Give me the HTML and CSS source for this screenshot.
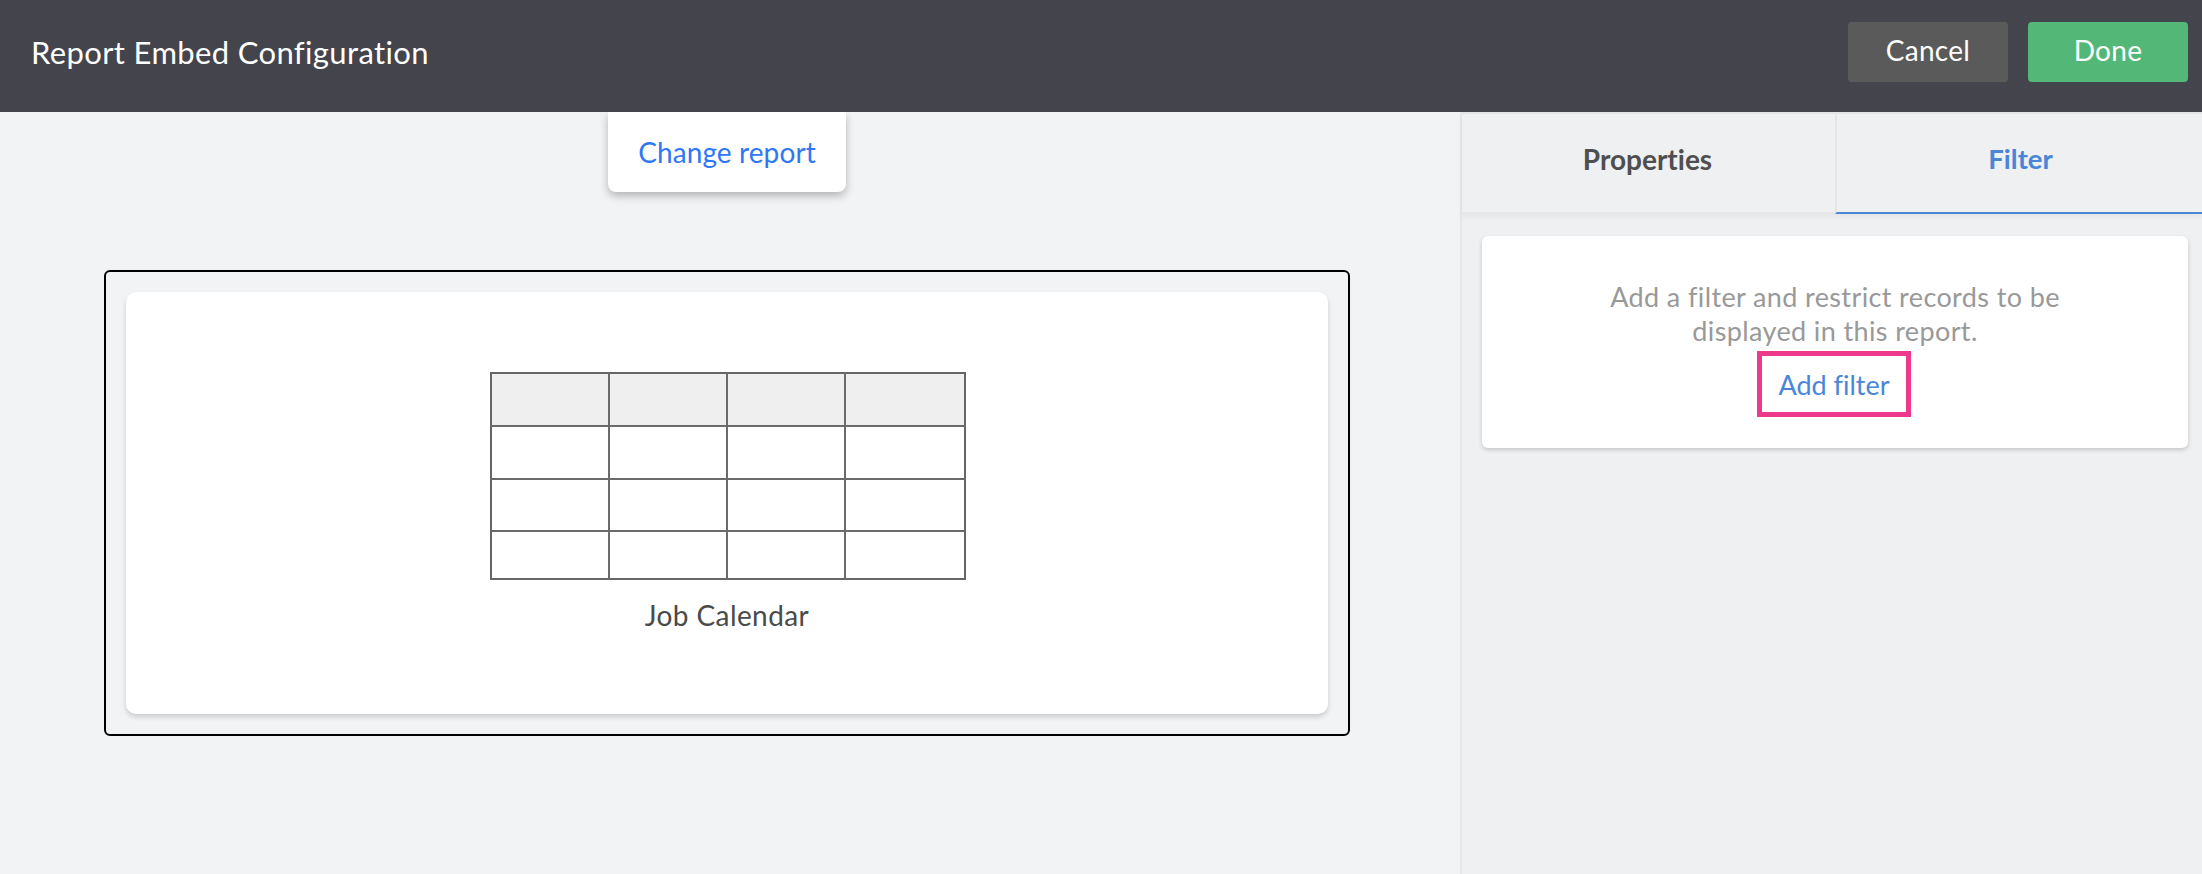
FILE: index.html
```html
<!DOCTYPE html>
<html lang="en">
<head>
<meta charset="utf-8">
<title>Report Embed Configuration</title>
<link rel="stylesheet" href="styles.css">
</head>
<body>
<header class="topbar">
  <h1 class="title">Report Embed Configuration</h1>
  <div class="actions">
    <button class="btn btn-cancel">Cancel</button>
    <button class="btn btn-done">Done</button>
  </div>
</header>
<div class="body">
  <main class="canvas">
    <div class="stage">
      <button class="change-report">Change report</button>
      <div class="frame">
        <div class="report-card">
          <svg class="table-art" width="476" height="208" viewBox="0 0 476 208" aria-hidden="true">
            <rect x="1" y="1" width="474" height="53" fill="#efefef"/>
            <rect x="1" y="1" width="474" height="206" fill="none" stroke="#666" stroke-width="2"/>
            <path d="M0 54H476M0 107H476M0 159H476M119 0V208M237 0V208M355 0V208" fill="none" stroke="#6a6a6a" stroke-width="2"/>
          </svg>
          <div class="report-name">Job Calendar</div>
        </div>
      </div>
    </div>
  </main>
  <aside class="sidebar">
    <nav class="tabs">
      <div class="tab">Properties</div>
      <div class="tab tab-active">Filter</div>
    </nav>
    <section class="filter-card">
      <p class="filter-text">Add a filter and restrict records to be<br>displayed in this report.</p>
      <a class="add-filter">Add filter</a>
    </section>
  </aside>
</div>
</body>
</html>
```
FILE: styles.css
```css
* { box-sizing: border-box; }
html, body { height: 100%; }
body {
  margin: 0;
  font-family: "Lato", "Open Sans", sans-serif;
  font-variant-ligatures: none;
  background: #f2f3f5;
  display: flex;
  flex-direction: column;
  overflow: hidden;
}
.topbar {
  height: 112px;
  flex: none;
  background: #43444c;
  display: flex;
  align-items: center;
  justify-content: space-between;
  padding: 0 14px 8px 31px;
  position: relative;
  z-index: 2;
}
.title {
  margin: 0;
  font-size: 31px;
  letter-spacing: .36px;
  font-weight: 400;
  color: #fff;
}
.actions { display: flex; gap: 20px; }
.btn {
  width: 160px;
  height: 60px;
  border: 0;
  border-radius: 4px;
  color: #fff;
  font: 400 28px "Lato", sans-serif;
  letter-spacing: .3px;
  padding: 0 0 4px;
}
.btn-cancel { background: #5a5a5a; }
.btn-done { background: #52b777; }
.body { flex: 1; display: flex; min-height: 0; }
.canvas { flex: 1; padding-left: 104px; }
.stage {
  width: 1246px;
  display: flex;
  flex-direction: column;
  align-items: center;
}
.change-report {
  width: 238px;
  height: 80px;
  border: 0;
  background: #fff;
  border-radius: 0 0 8px 8px;
  box-shadow: 0 4px 9px rgba(0,0,0,.26);
  color: #2f77f5;
  font: 400 28px "Lato", sans-serif;
  letter-spacing: .1px;
  padding: 0;
}
.frame {
  margin-top: 78px;
  width: 100%;
  height: 466px;
  border: 2px solid #000;
  border-radius: 6px;
  padding: 20px;
}
.report-card {
  height: 100%;
  background: #fff;
  border-radius: 10px;
  box-shadow: 0 3px 5px rgba(0,0,0,.16);
  display: flex;
  flex-direction: column;
  align-items: center;
  padding-top: 80px;
}
.table-art { display: block; margin-left: 2px; }
.report-name {
  margin-top: 18px;
  font-size: 28px;
  letter-spacing: .4px;
  line-height: 34px;
  color: #4a4a4a;
}
.sidebar {
  width: 742px;
  flex: none;
  background: #eff0f2;
  border-left: 2px solid #e6e7e9;
  border-top: 2px solid #e4e5e7;
}
.tabs {
  display: flex;
  height: 100px;
  box-shadow: 0 3px 6px rgba(0,0,0,.05);
}
.tab {
  display: flex;
  align-items: center;
  justify-content: center;
  font-size: 28px;
  font-weight: 700;
  color: #4f4f4f;
  padding: 0 2px 9px 0;
  width: 373px;
  border-bottom: 2px solid #e6e7e9;
}
.tab-active {
  flex: 1;
  color: #4a86d8;
  font-size: 27.5px;
  padding: 0 0 9px 2px;
  border-left: 2px solid #e4e5e7;
  border-bottom: 2px solid #4a86d8;
}
.filter-card {
  margin: 22px 14px 0 20px;
  height: 212px;
  background: #fff;
  border-radius: 6px;
  box-shadow: 0 2px 4px rgba(0,0,0,.18);
  display: flex;
  flex-direction: column;
  align-items: center;
  padding-top: 44px;
}
.filter-text {
  margin: 0 0 3px;
  font-size: 27px;
  letter-spacing: .38px;
  line-height: 34px;
  color: #999;
  text-align: center;
}
.add-filter {
  width: 154px;
  height: 66px;
  margin-right: 2px;
  border: 5px solid #ee3a8c;
  display: flex;
  align-items: center;
  justify-content: center;
  font-size: 27px;
  color: #4a86d8;
}
```
